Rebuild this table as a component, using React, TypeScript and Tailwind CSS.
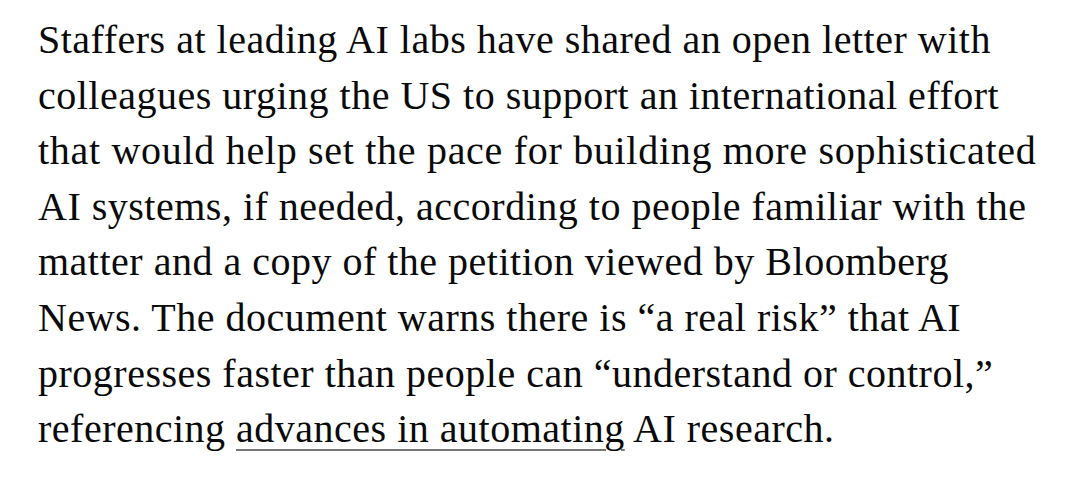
const lines: React.ReactNode[] = [
  "Staffers at leading AI labs have shared an open letter with",
  "colleagues urging the US to support an international effort",
  "that would help set the pace for building more sophisticated",
  "AI systems, if needed, according to people familiar with the",
  "matter and a copy of the petition viewed by Bloomberg",
  "News. The document warns there is \u201ca real risk\u201d that AI",
  "progresses faster than people can \u201cunderstand or control,\u201d",
  <>
    referencing{" "}
    <a href="#" className="underline decoration-[#777] decoration-2 underline-offset-[7px]">
      advances in automating
    </a>{" "}
    AI research.
  </>,
];

export default function App() {
  return (
    <div className="h-[480px] w-[1080px] bg-white pl-[38px] pt-[12px] font-['Liberation_Serif',serif] text-[40px] leading-[55.6px] tracking-[0.5px] text-[#0a0a0a]">
      {lines.map((line, i) => (
        <div key={i} className={i === 2 ? "whitespace-nowrap tracking-[0.7px]" : "whitespace-nowrap"}>
          {line}
        </div>
      ))}
    </div>
  );
}
